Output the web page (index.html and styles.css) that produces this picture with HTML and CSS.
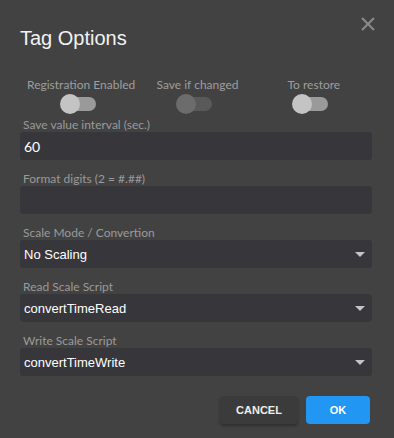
FILE: index.html
```html
<!DOCTYPE html>
<html lang="en">

<head>
    <title>Tag Options</title>
    <link rel="stylesheet" href="styles.css">
</head>

<body>
    <div class="dialog">
        <div class="header">
            <h2 class="title">Tag Options</h2>
            <button class="close-btn" aria-label="Close">
                <svg width="14" height="14" viewBox="0 0 14 14">
                    <path d="M1 1 L13 13 M13 1 L1 13" stroke="#8a8a8a" stroke-width="2" fill="none" />
                </svg>
            </button>
        </div>

        <div class="toggle-row">
            <div class="toggle-col">
                <span class="toggle-label">Registration Enabled</span>
                <span class="switch">
                    <span class="switch-track"></span>
                    <span class="switch-thumb"></span>
                </span>
            </div>
            <div class="toggle-col">
                <span class="toggle-label">Save if changed</span>
                <span class="switch switch-disabled">
                    <span class="switch-track"></span>
                    <span class="switch-thumb"></span>
                </span>
            </div>
            <div class="toggle-col">
                <span class="toggle-label">To restore</span>
                <span class="switch">
                    <span class="switch-track"></span>
                    <span class="switch-thumb"></span>
                </span>
            </div>
        </div>

        <div class="field">
            <label class="field-label">Save value interval (sec.)</label>
            <div class="input-box input-text">60</div>
        </div>

        <div class="field">
            <label class="field-label">Format digits (2 = #.##)</label>
            <div class="input-box input-text"></div>
        </div>

        <div class="field">
            <label class="field-label">Scale Mode / Convertion</label>
            <div class="input-box select-box">
                <span>No Scaling</span>
                <span class="arrow"></span>
            </div>
        </div>

        <div class="field">
            <label class="field-label">Read Scale Script</label>
            <div class="input-box select-box">
                <span>convertTimeRead</span>
                <span class="arrow"></span>
            </div>
        </div>

        <div class="field">
            <label class="field-label">Write Scale Script</label>
            <div class="input-box select-box">
                <span>convertTimeWrite</span>
                <span class="arrow"></span>
            </div>
        </div>

        <div class="actions">
            <button class="btn btn-cancel">CANCEL</button>
            <button class="btn btn-ok">OK</button>
        </div>
    </div>
</body>

</html>
```

FILE: styles.css
```css
body {
    margin: 0;
    background: #424242;
    font-family: 'Lato', 'Liberation Sans', sans-serif;
    color: #fff;
}

.dialog {
    width: 394px;
    height: 438px;
    box-sizing: border-box;
    padding: 0 22px 0 20px;
}

.header {
    display: flex;
    justify-content: space-between;
    align-items: flex-start;
    margin-right: -8px;
    padding-top: 12px;
}

.title {
    margin: 14px 0 0;
    font-family: 'Liberation Sans', Arial, sans-serif;
    font-size: 20px;
    line-height: 24px;
    font-weight: normal;
    color: #f2f2f2;
}

.close-btn {
    width: 24px;
    height: 24px;
    padding: 0;
    border: none;
    background: none;
    display: flex;
    justify-content: center;
    align-items: center;
    cursor: pointer;
}

.toggle-row {
    display: grid;
    grid-template-columns: repeat(3, 1fr);
    margin: 27px 0 0 3px;
}

.toggle-col {
    display: flex;
    flex-direction: column;
    align-items: center;
    gap: 1px;
}

.toggle-label {
    font-size: 12px;
    line-height: 16px;
    color: #9e9e9e;
}

.switch {
    position: relative;
    width: 36px;
    height: 20px;
    margin-right: 7px;
}

.switch-track {
    position: absolute;
    left: 2px;
    right: 0;
    top: 3px;
    height: 14px;
    border-radius: 7px;
    background: #9a9a9a;
}

.switch-thumb {
    position: absolute;
    left: 0;
    top: 0;
    width: 20px;
    height: 20px;
    border-radius: 50%;
    background: #c4c4c4;
}

.switch-disabled .switch-track {
    background: #595959;
}

.switch-disabled .switch-thumb {
    background: #6c6c6c;
}

.field {
    display: flex;
    flex-direction: column;
    margin-top: 12px;
}

.toggle-row + .field {
    margin-top: 4px;
}

.field-label {
    font-size: 12px;
    line-height: 14px;
    color: #9a9a9a;
    padding-left: 3px;
}

.input-box {
    height: 28px;
    box-sizing: border-box;
    background: #37363b;
    border-radius: 3px;
    padding: 0 7px 0 4px;
    display: flex;
    align-items: center;
}

.input-text {
    font-size: 14px;
    color: #fff;
}

.select-box {
    justify-content: space-between;
    font-family: 'Liberation Sans', Arial, sans-serif;
    font-size: 13px;
    color: #fff;
}

.arrow {
    width: 0;
    height: 0;
    border-left: 5px solid transparent;
    border-right: 5px solid transparent;
    border-top: 5px solid #c4c4c4;
}

.actions {
    display: flex;
    justify-content: flex-end;
    gap: 8px;
    margin: 20px 2px 0 0;
}

.btn {
    height: 28px;
    border: none;
    border-radius: 4px;
    font-family: 'Liberation Sans', Arial, sans-serif;
    font-size: 11px;
    font-weight: bold;
    color: #eee;
    cursor: pointer;
}

.btn-cancel {
    width: 78px;
    background: #3b3b3b;
    box-shadow: 0 2px 3px rgba(0, 0, 0, 0.3);
}

.btn-ok {
    width: 64px;
    background: #2196f3;
    color: #fff;
}
```
